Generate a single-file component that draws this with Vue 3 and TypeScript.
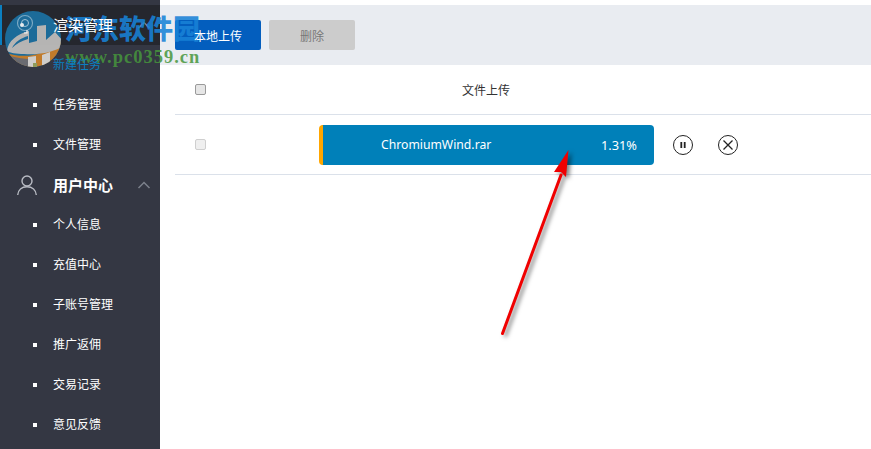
<script setup lang="ts">
const tasks: string[] = ['新建任务', '任务管理', '文件管理']
const users: string[] = ['个人信息', '充值中心', '子账号管理', '推广返佣', '交易记录', '意见反馈']
</script>

<template>
  <div class="page">
    <aside class="side">
      <div class="group active">
        <span class="gicon"></span>
        <span class="gtitle light">渲染管理</span>
        <svg class="chev" viewBox="0 0 14 8" width="14" height="8" fill="none" stroke="#7c808b" stroke-width="1.500">
          <path d="M1.500 7 7 1.500 12.500 7" />
        </svg>
      </div>
      <ul class="menu">
        <li v-for="(t, i) in tasks" :key="t" :class="{ current: i === 0 }">{{ t }}</li>
      </ul>
      <div class="group">
        <svg class="gicon" viewBox="0 0 20 20" width="20" height="20" fill="none" stroke="#b9bcc4" stroke-width="1.400">
          <circle cx="10" cy="6" r="5" />
          <path d="M.7 20c.4-5 4-8.300 9.300-8.300s8.900 3.300 9.300 8.300" />
        </svg>
        <span class="gtitle">用户中心</span>
        <svg class="chev" viewBox="0 0 14 8" width="14" height="8" fill="none" stroke="#7c808b" stroke-width="1.500">
          <path d="M1.500 7 7 1.500 12.500 7" />
        </svg>
      </div>
      <ul class="menu">
        <li v-for="u in users" :key="u">{{ u }}</li>
      </ul>
    </aside>

    <main class="main">
      <div class="toolbar">
        <button class="btn primary" type="button"><span class="btn-text">本地上传</span></button>
        <button class="btn muted" type="button">删除</button>
      </div>
      <div class="table">
        <div class="row head">
          <input class="check" type="checkbox" />
          <span class="head-title">文件上传</span>
        </div>
        <div class="row body">
          <input class="check faint" type="checkbox" />
          <div class="bar">
            <span class="name">ChromiumWind.rar</span>
            <span class="pct">1.31%</span>
          </div>
          <button class="round first" type="button" aria-label="pause">
            <svg viewBox="0 0 20 20" width="20" height="20" fill="none" stroke="#222" stroke-width="1">
              <circle cx="10" cy="10" r="9.500" />
              <path d="M8.300 7v6M11.700 7v6" stroke-width="1.800" />
            </svg>
          </button>
          <button class="round" type="button" aria-label="cancel">
            <svg viewBox="0 0 20 20" width="20" height="20" fill="none" stroke="#222" stroke-width="1">
              <circle cx="10" cy="10" r="9.500" />
              <path d="M5.500 5.500l9 9M14.500 5.500l-9 9" stroke-width="1.300" />
            </svg>
          </button>
        </div>
      </div>
    </main>

    <svg class="logo" viewBox="0 0 58 58" width="58" height="58">
      <defs>
        <clipPath id="logo-clip"><circle cx="29" cy="29" r="28" /></clipPath>
      </defs>
      <g clip-path="url(#logo-clip)">
        <rect width="58" height="58" fill="#1c6f9f" />
        <path d="M0 42C18 49 40 47 58 30V58H0z" fill="#c97f2a" />
        <path d="M3 41C4 31 13 24 25 21V33l8-2V16l9-1v15l9-8 7 8v7C46 43 34 45 20 44 12 44 6 43 3 41z" fill="#bdbcbb" />
        <path d="M8 38c3-6 9-10 16-12v3C17 31 12 34 8 38z" fill="#1c6f9f" />
        <path d="M6 46C14 48 20 49 25 49V58H6z" fill="#6d6e74" />
        <path d="M24 47l8-1V58h-8zM38 45l8-3V58h-8z" fill="#d8d6d3" />
        <circle cx="21" cy="13" r="7.500" fill="none" stroke="#7fb0cc" stroke-width="1.200" />
        <circle cx="21" cy="13" r="3.500" fill="none" stroke="#a9cbdf" stroke-width="1" />
        <circle cx="18" cy="15" r="2" fill="#f2f6f9" />
        <path d="M23 20v3h-3" fill="none" stroke="#fff" stroke-width="1.200" />
      </g>
    </svg>
    <div class="mark">
      <div class="mark-cn">河东软件园</div>
      <div class="mark-url">www.pc0359.cn</div>
    </div>

    <svg class="arrow" viewBox="0 0 871 449" width="871" height="449">
      <path d="M502.500 333.500 561 175" fill="none" stroke="#f00000" stroke-width="3" stroke-linecap="round" />
      <path d="M568.500 150 554 172 561 172 566 177z" fill="#f00000" />
    </svg>
  </div>
</template>

<style>
html, body { margin: 0; background: #fff; }
</style>

<style scoped>
.page {
  position: relative;
  display: flex;
  width: 871px;
  height: 449px;
  overflow: hidden;
  font-family: "Noto Sans CJK SC", "Noto Sans", sans-serif;
  font-size: 12px;
}
.side {
  flex: 0 0 160px;
  padding-top: 5px;
  background: #343743;
  color: #fff;
  box-sizing: border-box;
}
.group {
  display: flex;
  align-items: center;
  height: 40px;
  padding-left: 17px;
}
.group.active {
  background: #25272e;
  box-shadow: inset 2px 0 0 #0b7fc0;
}
.gicon { width: 20px; height: 20px; flex: none; }
.gtitle {
  position: relative;
  z-index: 2;
  margin-left: 16px;
  font-size: 15px;
  font-weight: 700;
  line-height: 38px;
}
.gtitle.light { font-weight: 400; }
.chev { margin-left: 24px; }
.menu { margin: 0; padding: 0; list-style: none; }
.menu li {
  position: relative;
  height: 40px;
  padding-left: 53px;
  line-height: 37px;
  color: #fff;
}
.menu li::before {
  content: "";
  position: absolute;
  left: 33px;
  top: 18px;
  width: 4px;
  height: 4px;
  background: #fff;
}
.menu li.current { z-index: 2; color: #0b7fc0; }
.menu li.current::before { background: #8f9a5a; }
.main { flex: 1; padding-top: 5px; min-width: 0; }
.toolbar {
  display: flex;
  gap: 8px;
  align-items: center;
  height: 60px;
  padding-left: 15px;
  background: #e9ecf1;
}
.btn {
  width: 86px;
  height: 30px;
  padding: 0;
  border: 0;
  border-radius: 2px;
  font: inherit;
}
.btn-text { position: relative; z-index: 2; }
.primary { background: #035ebe; color: #fff; }
.muted { background: #cccccc; color: #777; }
.table { margin-left: 15px; }
.row {
  position: relative;
  display: flex;
  align-items: center;
  box-sizing: border-box;
  border-bottom: 1px solid #dbe1ea;
}
.head { height: 50px; padding-left: 20px; color: #333; }
.head-title { margin-left: 256px; }
.body { height: 60px; padding-left: 20px; }
.check {
  appearance: none;
  flex: none;
  box-sizing: border-box;
  width: 11px;
  height: 11px;
  margin: 0;
  border: 1px solid #9a9a9a;
  border-radius: 2px;
  background: #e6e6e6;
}
.check.faint { border-color: #cfcfcf; background: #efefef; }
.bar {
  display: flex;
  align-items: center;
  box-sizing: border-box;
  width: 335px;
  height: 40px;
  margin-left: 113px;
  padding: 0 17px 0 58px;
  border-left: 4px solid #ffa600;
  border-radius: 4px;
  background: #0080b9;
  color: #fff;
  font-family: "Noto Sans", sans-serif;
  font-size: 12.200px;
}
.pct { margin-left: auto; font-size: 12.800px; }
.round {
  display: flex;
  width: 20px;
  height: 20px;
  margin-left: 25px;
  padding: 0;
  border: 0;
  background: none;
}
.round.first { margin-left: 19px; }
.logo { position: absolute; z-index: 1; left: 4px; top: 10px; opacity: 0.95; }
.mark {
  position: absolute;
  z-index: 1;
  left: 65px;
  top: 9px;
  font-family: "Liberation Serif", "Noto Sans CJK SC", serif;
  font-weight: 700;
  pointer-events: none;
}
.mark-cn {
  font-family: "Noto Sans CJK SC", sans-serif;
  font-size: 27px;
  font-weight: 900;
  line-height: 37px;
  color: rgba(24, 130, 215, 0.88);
}
.mark-url {
  margin-top: 1px;
  font-size: 18.500px;
  line-height: 20px;
  letter-spacing: 1px;
  color: rgba(70, 150, 60, 0.85);
}
.arrow {
  position: absolute;
  z-index: 3;
  left: 0;
  top: 0;
  pointer-events: none;
  filter: drop-shadow(3px 2px 2px rgba(0, 0, 0, 0.5));
}
</style>
